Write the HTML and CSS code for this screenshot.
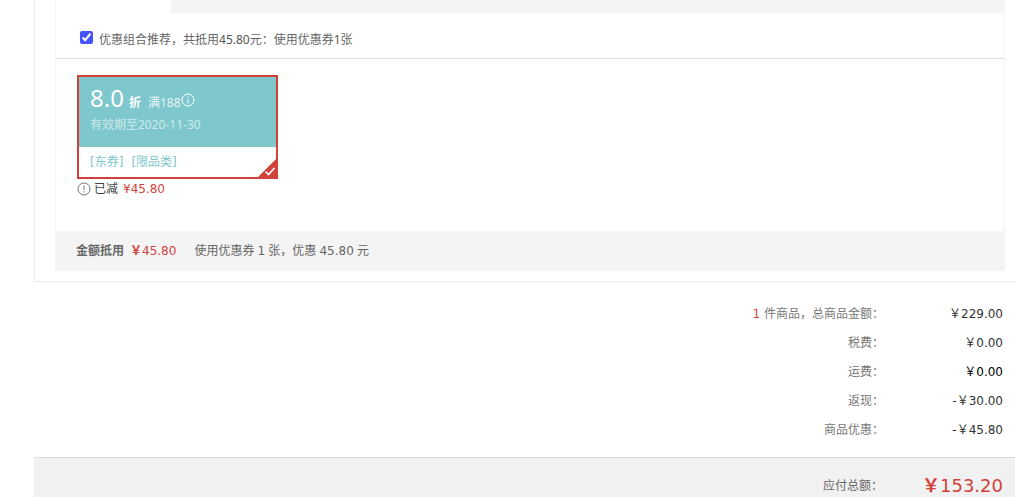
FILE: index.html
```
<!DOCTYPE html>
<html lang="zh-CN">
<head>
  <meta charset="UTF-8">
  <meta name="viewport" content="width=device-width, initial-scale=1.0">
  <title>订单结算</title>
  <link rel="stylesheet" href="styles.css">
</head>
<body>

  <div class="checkout">
    <div class="panel">
      <div class="tabs"><div class="tab-current"></div></div>

      <div class="recommend">
        <input type="checkbox" id="recommend" checked>
        <label for="recommend">优惠组合推荐，共抵用<span class="strong">45.80</span>元：使用优惠券<span class="strong">1</span>张</label>
      </div>

      <div class="coupons">
        <div class="coupon">
          <div class="coupon-top">
            <div class="coupon-price">
              <span class="discount">8.0</span>
              <b>折</b>
              <span class="limit">满188</span>
              <svg class="icon" viewBox="0 0 14 14" width="14" height="14" fill="none" stroke="#fff">
                <circle cx="7" cy="7" r="6"/>
                <path d="M7 3.5v1.2M7 6v4.5"/>
              </svg>
            </div>
            <div class="coupon-time">有效期至2020-11-30</div>
          </div>
          <div class="coupon-type"><span>[东券]</span><span>[限品类]</span></div>
          <svg class="selected" viewBox="0 0 22 22" width="22" height="22">
            <path d="M22 0v22H0z" fill="#d0423a"/>
            <path d="M9.5 14.5l3 3 6-6.5" fill="none" stroke="#fff" stroke-width="1.7"/>
          </svg>
        </div>
        <div class="coupon-tip">
          <svg class="icon" viewBox="0 0 14 14" width="14" height="14" fill="none" stroke="#777">
            <circle cx="7" cy="7" r="6"/>
            <path d="M7 3.5v4.7M7 9.3v1.2"/>
          </svg>
          <span>已减</span>
          <span class="red">¥45.80</span>
        </div>
      </div>

      <div class="deduct">
        <b>金额抵用</b>
        <span class="red"><b>￥</b>45.80</span>
        <span class="deduct-info">使用优惠券 <span class="num">1</span> 张，优惠 <span class="num">45.80</span> 元</span>
      </div>
    </div>
  </div>

  <dl class="statistic">
    <div class="row"><dt><span class="red">1</span> 件商品，总商品金额：</dt><dd>￥229.00</dd></div>
    <div class="row"><dt>税费：</dt><dd>￥0.00</dd></div>
    <div class="row"><dt>运费：</dt><dd class="freight">￥0.00</dd></div>
    <div class="row"><dt>返现：</dt><dd>-￥30.00</dd></div>
    <div class="row"><dt>商品优惠：</dt><dd>-￥45.80</dd></div>
  </dl>

  <div class="total">
    <span class="total-label">应付总额：</span>
    <span class="total-price"><b>￥</b>153.20</span>
  </div>

</body>
</html>
```
FILE: styles.css
```
* {
  box-sizing: border-box;
}

body {
  margin: 0;
  padding-left: 34px;
  background: #fff;
  color: #666;
  font: 12px/18px "Noto Sans", "Noto Sans CJK SC", sans-serif;
}

.red {
  color: #d0423a;
}

.checkout {
  padding: 0 10px 10px 20px;
  border-left: 1px solid #ebebeb;
  border-bottom: 1px solid #ebebeb;
}

.panel {
  border: solid #f4f4f4;
  border-width: 0 1px;
}

.tabs {
  height: 13px;
  background: #f4f4f4;
}

.tab-current {
  width: 115px;
  height: 13px;
  background: #fff;
}

/* recommended combination */
.recommend {
  display: flex;
  align-items: center;
  height: 46px;
  padding: 8px 24px 0;
  border-bottom: 1px solid #ddd;
}

.recommend input {
  width: 13px;
  height: 13px;
  margin: 0 6px 4px 0;
  accent-color: #4353ff;
}

.strong {
  color: #555;
}

/* coupon card */
.coupons {
  padding: 16px 21px 32px;
}

.coupon {
  position: relative;
  width: 201px;
  border: 2px solid #d0423a;
}

.coupon-top {
  height: 70px;
  padding: 6px 11px;
  background: #7ec8cd;
  color: #fff;
}

.coupon-price {
  display: flex;
  align-items: baseline;
  height: 33px;
  line-height: 30px;
}

.discount {
  margin-right: 5px;
  font-size: 24px;
}

.limit {
  margin-left: 7px;
  opacity: 0.8;
}

.icon {
  flex: none;
  align-self: center;
}

.coupon-time {
  opacity: 0.6;
}

.coupon-type {
  display: flex;
  gap: 8px;
  height: 30px;
  padding: 0 11px;
  line-height: 30px;
  color: #7ec8cd;
  font-family: "DejaVu Sans", "Noto Sans CJK SC", sans-serif;
}

.selected {
  position: absolute;
  right: -2px;
  bottom: -2px;
}

.coupon-tip {
  display: flex;
  align-items: center;
  height: 20px;
  color: #444;
  font-family: "DejaVu Sans", "Noto Sans CJK SC", sans-serif;
}

.coupon-tip span {
  margin-left: 3px;
}

.coupon-tip .red {
  margin-left: 5px;
}

.deduct {
  display: flex;
  height: 40px;
  padding: 0 20px;
  background: #f4f4f4;
  line-height: 40px;
  font-family: "DejaVu Sans", "Noto Sans CJK SC", sans-serif;
}

.deduct .red {
  margin-left: 6px;
}

.deduct-info {
  margin-left: 18px;
  font-family: "Noto Sans", "Noto Sans CJK SC", sans-serif;
}

.num {
  font-family: "DejaVu Sans", sans-serif;
}

/* amounts */
.statistic {
  margin: 0;
  padding: 18px 12px 12px 0;
  font-family: "DejaVu Sans", "Noto Sans CJK SC", sans-serif;
}

.row {
  display: flex;
  justify-content: flex-end;
  line-height: 29px;
}

.row dt {
  color: #777;
}

.row dd {
  width: 119px;
  margin: 0;
  color: #333;
  text-align: right;
}

.row .freight {
  color: #000;
}

.total {
  display: flex;
  justify-content: flex-end;
  padding: 15px 12px 0 0;
  border-top: 1px solid #ddd;
  background: #f1f1f1;
  line-height: 24px;
  font-family: "DejaVu Sans", "Noto Sans CJK SC", sans-serif;
}

.total-label {
  line-height: 26px;
}

.total-price {
  width: 120px;
  color: #d0423a;
  font-size: 18px;
  line-height: 26px;
  text-align: right;
}
```
